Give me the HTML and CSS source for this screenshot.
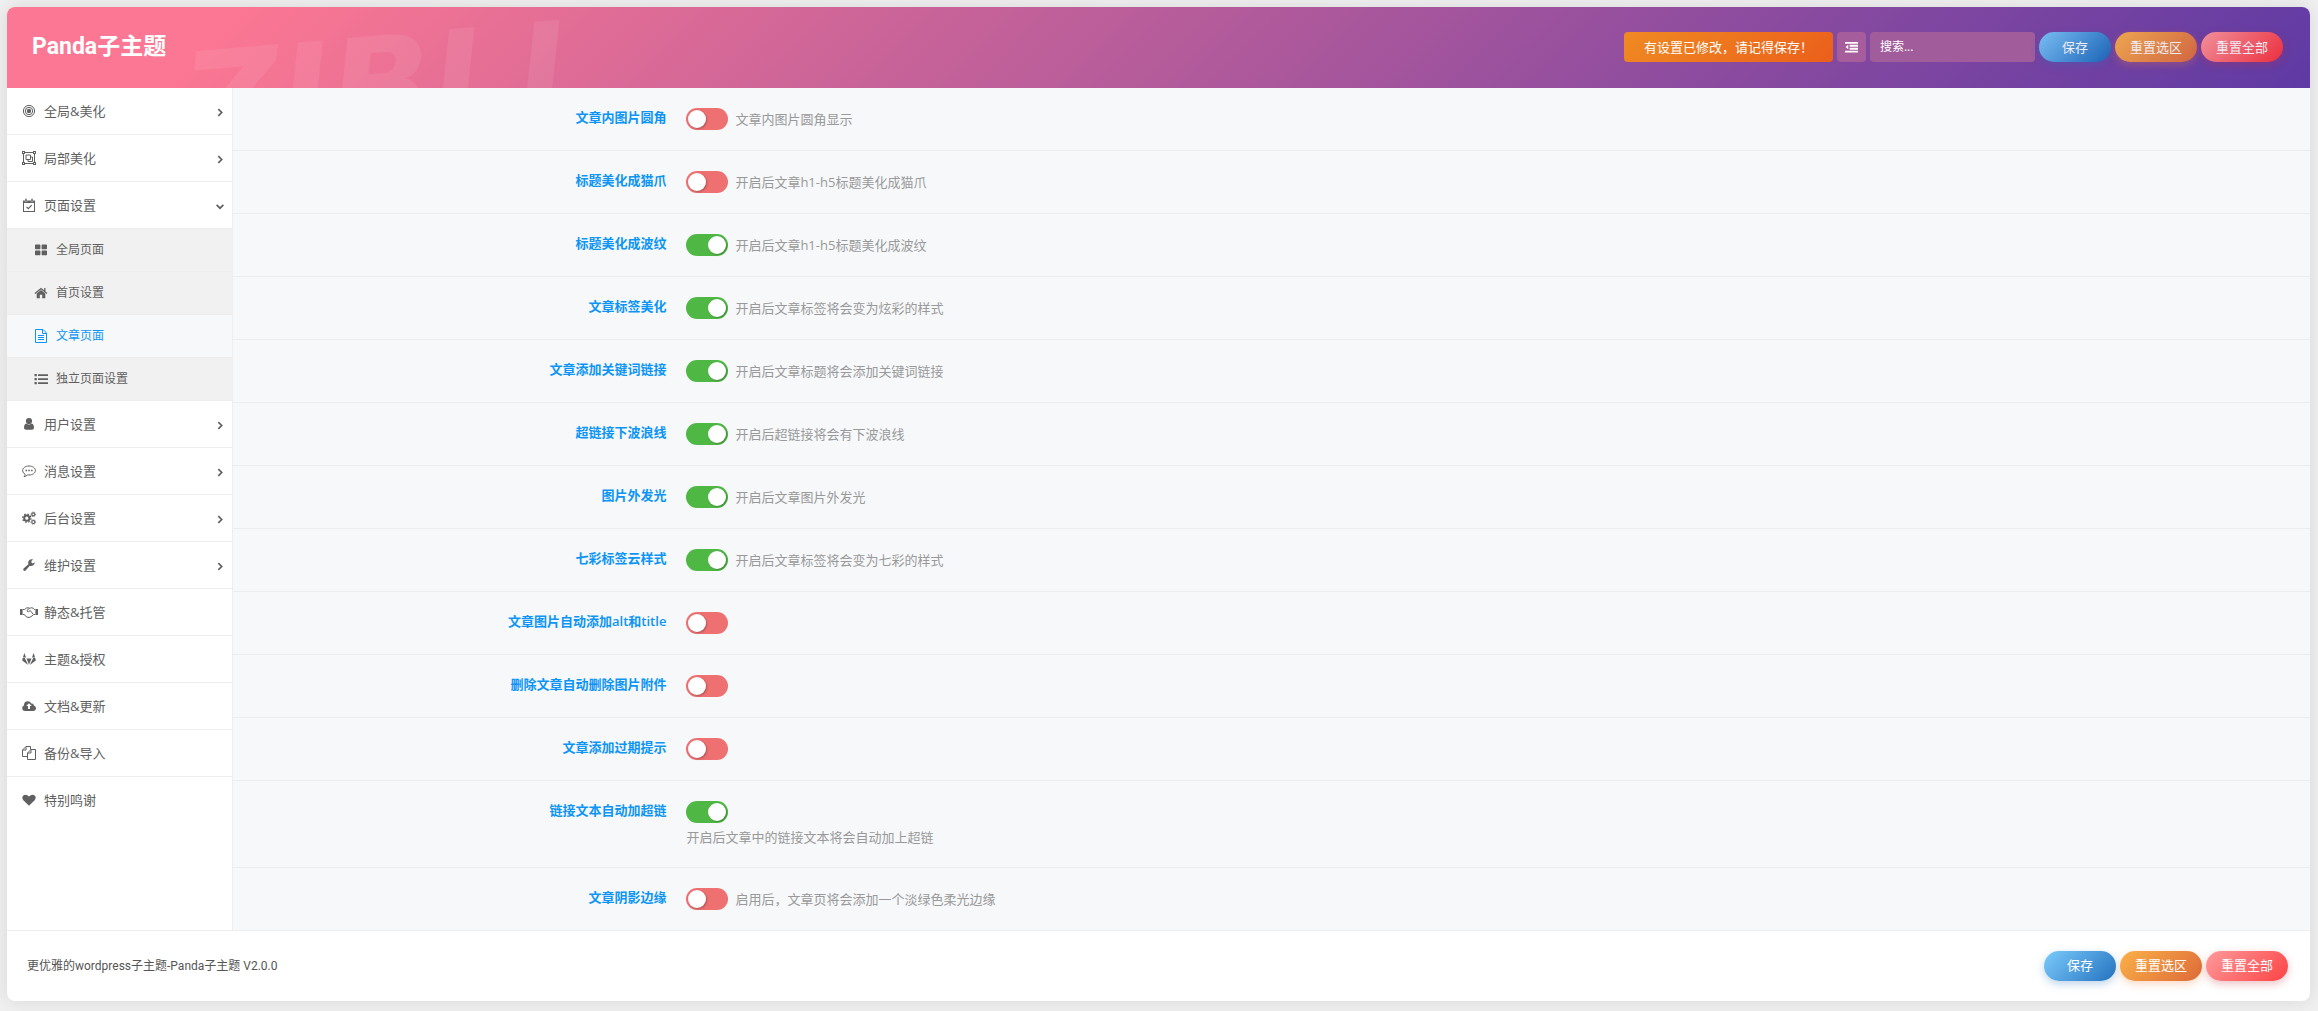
FILE: index.html
```html
<!DOCTYPE html>
<html lang="zh-CN">
<head>
<meta charset="utf-8">
<title>Panda子主题</title>
<link rel="stylesheet" href="styles.css">
</head>
<body>
<svg class="sprite" aria-hidden="true">
  <symbol id="i-target" viewBox="0 0 14 14"><g fill="none" stroke="currentColor" stroke-width="1"><circle cx="7" cy="7" r="5.600"/><circle cx="7" cy="7" r="3.700"/></g><circle cx="7" cy="7" r="2.200" fill="currentColor"/></symbol>
  <symbol id="i-group" viewBox="0 0 16 14"><g fill="none" stroke="currentColor"><path d="M2.500 1.500h11v11h-11z"/><path d="M5 4h4.500v4.500H5z"/><path d="M9.500 6H11.500v4.500H7V8.500"/></g><path d="M1 0h3v3H1zM12 0h3v3h-3zM1 11h3v3H1zM12 11h3v3h-3z" fill="currentColor"/><path d="M2 1h1v1H2zM13 1h1v1h-1zM2 12h1v1H2zM13 12h1v1h-1z" fill="#fff"/></symbol>
  <symbol id="i-calendar" viewBox="0 0 14 14"><path d="M1 2.500h12V14H1zM2 5v8h10V5z" fill="currentColor" fill-rule="evenodd"/><rect x="3" y=".5" width="2" height="3.500" rx="1" fill="currentColor" stroke="#fff" stroke-width=".4"/><rect x="9" y=".5" width="2" height="3.500" rx="1" fill="currentColor" stroke="#fff" stroke-width=".4"/><path d="M4.500 8.800l1.800 1.800 3.400-3.500" fill="none" stroke="currentColor" stroke-width="1.200"/></symbol>
  <symbol id="i-grid" viewBox="0 0 14 14"><path d="M1.700 1.500h4q.7 0 .7.700v3.400q0 .7-.7.700h-4q-.7 0-.7-.7V2.200q0-.7.7-.7zM8.300 1.500h4q.7 0 .7.700v3.400q0 .7-.7.700h-4q-.7 0-.7-.7V2.200q0-.7.7-.7zM1.700 7.500h4q.7 0 .7.700v3.400q0 .7-.7.700h-4q-.7 0-.7-.7V8.200q0-.7.7-.7zM8.300 7.500h4q.7 0 .7.700v3.400q0 .7-.7.700h-4q-.7 0-.7-.7V8.200q0-.7.7-.7z" fill="currentColor"/></symbol>
  <symbol id="i-home" viewBox="0 0 14 14"><path d="M7 4l4.300 3.600v4.200q0 .5-.5.500H8.200V8.800H5.800v3.500H3.200q-.5 0-.5-.5V7.600z" fill="currentColor"/><path d="M1 7.500L7 2.500l6 5M10.800 2v3.500" fill="none" stroke="currentColor" stroke-width="1.300"/></symbol>
  <symbol id="i-file" viewBox="0 0 14 14"><path d="M1.500.5h7.500l3.500 3.500v9.500h-11zM8.500.5v4h4M4 6.500h6M4 8.500h6M4 10.500h6" fill="none" stroke="currentColor"/></symbol>
  <symbol id="i-list" viewBox="0 0 14 14"><path d="M.5 2h2.300v2.200H.5zM.5 6h2.300v2.200H.5zM.5 10h2.300v2.200H.5zM4 2.200h10v1.800H4zM4 6.200h10v1.800H4zM4 10.200h10v1.800H4z" fill="currentColor"/></symbol>
  <symbol id="i-user" viewBox="0 0 14 14"><circle cx="7" cy="4" r="3.100" fill="currentColor"/><path d="M4.200 6.500q2.800 2.200 5.600 0Q12 7.200 12 10.800q0 2-2 2H4q-2 0-2-2 0-3.600 2.200-4.300z" fill="currentColor"/></symbol>
  <symbol id="i-comment" viewBox="0 0 14 14"><path d="M7 2c3.600 0 6.400 2 6.400 4.500S10.600 11 7 11q-.8 0-1.500-.1Q3.800 12.600 2 12.700q1-1 1.200-2.400Q.6 9 .6 6.500C.6 4 3.400 2 7 2z" fill="none" stroke="currentColor"/><path d="M3.500 5.800H5v1.500H3.500zM6.300 5.800h1.500v1.500H6.300zM9.100 5.800h1.500v1.500H9.100z" fill="currentColor"/></symbol>
  <symbol id="i-cogs" viewBox="0 0 14 14"><g fill="none" stroke="currentColor"><circle cx="4.800" cy="7.200" r="2.600" stroke-width="2"/><circle cx="4.800" cy="7.200" r="4.100" stroke-width="1.400" stroke-dasharray="1.600 1.620"/><circle cx="11.300" cy="3.300" r="1.500" stroke-width="1.200"/><circle cx="11.300" cy="3.300" r="2.300" stroke-width=".8" stroke-dasharray="1 .8"/><circle cx="11.300" cy="11" r="1.500" stroke-width="1.200"/><circle cx="11.300" cy="11" r="2.300" stroke-width=".8" stroke-dasharray="1 .8"/></g></symbol>
  <symbol id="i-wrench" viewBox="0 0 14 14"><path d="M12.800 4.200a3.600 3.600 0 0 1-5 3.500L3.600 12.500q-1 .9-2 0-.9-1 0-2l4.800-4.200a3.600 3.600 0 0 1 4.800-4.700L9.400 3v1.600l1.400.8z" fill="currentColor"/></symbol>
  <symbol id="i-shake" viewBox="0 0 18 14"><path d="M0 4h2.600v6H0zM15.400 4H18v6h-2.600z" fill="currentColor"/><path d="M3 4.500h1.500L6.500 3q2-.6 3 .3 2-1 3.500-.2l1.200 1.400H15M3 9.500h1l3 2.700q2 .8 4-.5l2.600-2.200H15M9.500 3.300L7 5.400q0 1.500 1.500 1.300L10.300 5.500 13 9" fill="none" stroke="currentColor"/></symbol>
  <symbol id="i-gitlab" viewBox="0 0 14 14"><path d="M2.400 1L4 5.600H.9zM11.600 1l1.500 4.600H10zM4.500 6.500h5L7 12.500zM.7 6L2.800 6 6.200 13 .2 8.400zM13.300 6l-2.100 0L7.800 13l6-4.600z" fill="currentColor"/></symbol>
  <symbol id="i-cloud" viewBox="0 0 14 14"><path d="M3.200 12Q.2 11.800.2 9q0-1.800 1.700-2.600Q2 2.300 5.800 2.200q2.600 0 3.500 2.400 2.300-.5 2.600 2Q14 7.200 14 9.300 13.900 12 11 12zM6 7v3h2V7h1.800L7 4.200 4.200 7z" fill="currentColor" fill-rule="evenodd"/></symbol>
  <symbol id="i-copy" viewBox="0 0 14 14"><path d="M5.500 10.500h-5V4L4 .5h4.500v3M4 .5V4H.5M5.500 7L9 3.500h4.500v10h-8zM9 3.500V7H5.500" fill="none" stroke="currentColor"/></symbol>
  <symbol id="i-heart" viewBox="0 0 14 14"><path d="M7 12.800L1.300 7.300Q-.6 5 .8 3 3.800.4 7 3.500q3.200-3.100 6.200-.5 1.400 2-.5 4.300z" fill="currentColor"/></symbol>
  <symbol id="i-outdent" viewBox="0 0 14 14"><path d="M0 1.500h14v2H0zM5 4.700h9v2H5zM5 7.900h9v2H5zM0 11h14v2H0zM3.500 4.500v5L.6 7z" fill="currentColor"/></symbol>
  <symbol id="i-chevron" viewBox="0 0 8 8"><path d="M2.500 1L5.500 4 2.500 7" fill="none" stroke="currentColor" stroke-width="1.500"/></symbol>
</svg>

<form class="panel">
  <header class="header">
    <span class="watermark" aria-hidden="true">ZIBLL</span>
    <h1 class="title">Panda子主题</h1>
    <div class="tools">
      <span class="notice">有设置已修改，请记得保存！</span>
      <button type="button" class="expand" aria-label="展开"><svg class="expand-icon"><use href="#i-outdent"/></svg></button>
      <input class="search" type="text" placeholder="搜索..." aria-label="搜索">
      <button type="button" class="btn btn-save">保存</button>
      <button type="button" class="btn btn-section">重置选区</button>
      <button type="button" class="btn btn-all">重置全部</button>
    </div>
  </header>

  <div class="body">
    <nav class="nav">
      <ul class="menu">
        <li><a class="item" href="#"><svg class="icon"><use href="#i-target"/></svg>全局&amp;美化<svg class="arrow"><use href="#i-chevron"/></svg></a></li>
        <li><a class="item" href="#"><svg class="icon"><use href="#i-group"/></svg>局部美化<svg class="arrow"><use href="#i-chevron"/></svg></a></li>
        <li><a class="item" href="#"><svg class="icon"><use href="#i-calendar"/></svg>页面设置<svg class="arrow arrow-open"><use href="#i-chevron"/></svg></a>
          <ul class="submenu">
            <li><a class="subitem" href="#"><svg class="icon icon-sub"><use href="#i-grid"/></svg>全局页面</a></li>
            <li><a class="subitem" href="#"><svg class="icon icon-sub"><use href="#i-home"/></svg>首页设置</a></li>
            <li><a class="subitem active" href="#"><svg class="icon icon-sub"><use href="#i-file"/></svg>文章页面</a></li>
            <li><a class="subitem" href="#"><svg class="icon icon-sub"><use href="#i-list"/></svg>独立页面设置</a></li>
          </ul>
        </li>
        <li><a class="item" href="#"><svg class="icon"><use href="#i-user"/></svg>用户设置<svg class="arrow"><use href="#i-chevron"/></svg></a></li>
        <li><a class="item" href="#"><svg class="icon"><use href="#i-comment"/></svg>消息设置<svg class="arrow"><use href="#i-chevron"/></svg></a></li>
        <li><a class="item" href="#"><svg class="icon"><use href="#i-cogs"/></svg>后台设置<svg class="arrow"><use href="#i-chevron"/></svg></a></li>
        <li><a class="item" href="#"><svg class="icon"><use href="#i-wrench"/></svg>维护设置<svg class="arrow"><use href="#i-chevron"/></svg></a></li>
        <li><a class="item" href="#"><svg class="icon"><use href="#i-shake"/></svg>静态&amp;托管</a></li>
        <li><a class="item" href="#"><svg class="icon"><use href="#i-gitlab"/></svg>主题&amp;授权</a></li>
        <li><a class="item" href="#"><svg class="icon"><use href="#i-cloud"/></svg>文档&amp;更新</a></li>
        <li><a class="item" href="#"><svg class="icon"><use href="#i-copy"/></svg>备份&amp;导入</a></li>
        <li><a class="item" href="#"><svg class="icon"><use href="#i-heart"/></svg>特别鸣谢</a></li>
      </ul>
    </nav>

    <main class="content">
      <div class="row"><label class="label" for="f1">文章内图片圆角</label><div class="field"><input class="switch" type="checkbox" id="f1"><span class="desc">文章内图片圆角显示</span></div></div>
      <div class="row"><label class="label" for="f2">标题美化成猫爪</label><div class="field"><input class="switch" type="checkbox" id="f2"><span class="desc">开启后文章h1-h5标题美化成猫爪</span></div></div>
      <div class="row"><label class="label" for="f3">标题美化成波纹</label><div class="field"><input class="switch" type="checkbox" id="f3" checked><span class="desc">开启后文章h1-h5标题美化成波纹</span></div></div>
      <div class="row"><label class="label" for="f4">文章标签美化</label><div class="field"><input class="switch" type="checkbox" id="f4" checked><span class="desc">开启后文章标签将会变为炫彩的样式</span></div></div>
      <div class="row"><label class="label" for="f5">文章添加关键词链接</label><div class="field"><input class="switch" type="checkbox" id="f5" checked><span class="desc">开启后文章标题将会添加关键词链接</span></div></div>
      <div class="row"><label class="label" for="f6">超链接下波浪线</label><div class="field"><input class="switch" type="checkbox" id="f6" checked><span class="desc">开启后超链接将会有下波浪线</span></div></div>
      <div class="row"><label class="label" for="f7">图片外发光</label><div class="field"><input class="switch" type="checkbox" id="f7" checked><span class="desc">开启后文章图片外发光</span></div></div>
      <div class="row"><label class="label" for="f8">七彩标签云样式</label><div class="field"><input class="switch" type="checkbox" id="f8" checked><span class="desc">开启后文章标签将会变为七彩的样式</span></div></div>
      <div class="row"><label class="label" for="f9">文章图片自动添加alt和title</label><div class="field"><input class="switch" type="checkbox" id="f9"></div></div>
      <div class="row"><label class="label" for="f10">删除文章自动删除图片附件</label><div class="field"><input class="switch" type="checkbox" id="f10"></div></div>
      <div class="row"><label class="label" for="f11">文章添加过期提示</label><div class="field"><input class="switch" type="checkbox" id="f11"></div></div>
      <div class="row"><label class="label" for="f12">链接文本自动加超链</label><div class="field field-stacked"><input class="switch" type="checkbox" id="f12" checked><span class="desc">开启后文章中的链接文本将会自动加上超链</span></div></div>
      <div class="row"><label class="label" for="f13">文章阴影边缘</label><div class="field"><input class="switch" type="checkbox" id="f13"><span class="desc">启用后，文章页将会添加一个淡绿色柔光边缘</span></div></div>
    </main>
  </div>

  <footer class="footer">
    <span>更优雅的wordpress子主题-Panda子主题 V2.0.0</span>
    <div class="actions">
      <button type="button" class="btn btn-save">保存</button>
      <button type="button" class="btn btn-section">重置选区</button>
      <button type="button" class="btn btn-all">重置全部</button>
    </div>
  </footer>
</form>
</body>
</html>
```
FILE: styles.css
```css
* { box-sizing: border-box; }

body {
  margin: 0;
  padding: 7px 8px 10px 7px;
  background: #f0f0f1;
  color: #555;
  font: 13px/20px "Open Sans", "Noto Sans CJK SC", sans-serif;
}

ul { list-style: none; margin: 0; padding: 0; }
a { color: inherit; text-decoration: none; }
button, input { font: inherit; margin: 0; border: 0; }
.sprite { display: none; }

.panel {
  background: #fff;
  border-radius: 8px;
  box-shadow: 0 0 20px rgba(0, 0, 0, 0.1);
}

/* Header */
.header {
  position: relative;
  display: flex;
  align-items: center;
  justify-content: space-between;
  height: 81px;
  padding: 0 27px 2px 25px;
  overflow: hidden;
  border-radius: 8px 8px 0 0;
  background: linear-gradient(135deg, #fb7793 10%, #5f3aa4 100%);
}

.watermark {
  position: absolute;
  left: 176px;
  top: 12px;
  color: rgba(255, 255, 255, 0.08);
  font: italic 700 134px/134px "DejaVu Sans", sans-serif;
  transform: rotate(-5deg);
}

.title {
  margin: 0;
  color: #fff;
  font: 700 23px/30px Roboto, "Noto Sans CJK SC", sans-serif;
}

.tools, .actions { display: flex; align-items: center; gap: 4px; }

.notice {
  padding: 5px 20px;
  border-radius: 4px;
  color: #fff;
  background: linear-gradient(135deg, #ef8a22, #eb5f1b);
}

.expand {
  display: flex;
  padding: 8px;
  border-radius: 4px;
  color: #fff;
  background: #a65d9b;
}
.expand-icon { width: 13px; height: 14px; }

.search {
  width: 165px;
  height: 30px;
  padding: 0 10px;
  border-radius: 4px;
  color: #fff;
  background: #a05c9b;
  font-size: 12px;
}
.search::placeholder { color: #fff; opacity: 1; }

.btn {
  height: 30px;
  padding: 0 15px;
  border-radius: 15px;
  color: #fff;
}
.btn-save {
  padding: 0 23px;
  background: linear-gradient(135deg, #7bcbfc, #2472bf);
  box-shadow: 0 3px 8px rgba(36, 114, 191, 0.3);
}
.btn-section {
  background: linear-gradient(135deg, #fab148, #dd6a38);
  box-shadow: 0 3px 8px rgba(250, 130, 60, 0.3);
}
.btn-all {
  background: linear-gradient(135deg, #ff9a9b, #fc4344);
  box-shadow: 0 3px 8px rgba(200, 50, 60, 0.3);
}
.tools .btn { opacity: 0.9; }
.tools .btn-save { background: linear-gradient(135deg, #7bcbfc, #1267b9); }
.tools .btn-all { background: linear-gradient(135deg, #ff9a9b, #fb2d33); }

/* Sidebar */
.body { display: flex; }

.nav {
  flex: 0 0 226px;
  border-right: 1px solid #eee;
  color: #606060;
}

.item, .subitem { display: flex; align-items: center; }
.item {
  height: 47px;
  padding: 0 7px 0 12px;
  border-bottom: 1px solid #eee;
}
.menu > li:last-child .item { border-bottom-color: transparent; }

.subitem {
  height: 43px;
  padding-left: 26px;
  border-bottom: 1px solid #eee;
  background: #f1f1f1;
  font-size: 12px;
}
.active { color: #0d95f5; background: #f6f8fa; }

.icon {
  flex: none;
  width: 20px;
  height: 14px;
  margin-right: 5px;
}
.icon-sub { width: 16px; margin-right: 7px; }

.arrow {
  width: 10px;
  height: 9px;
  margin: 2px 0 0 auto;
}
.arrow-open { transform: rotate(90deg); }

/* Settings */
.content {
  flex: 1;
  background: #f6f8fa;
}

.row {
  display: flex;
  gap: 20px;
  padding: 20px 30px;
  border-bottom: 1px solid #ecedef;
}
.row:last-child { border-bottom: 0; }

.label {
  flex: 0 0 20%;
  color: #0d95f5;
  font-weight: 600;
  line-height: 18px;
  text-align: right;
}

.field {
  display: flex;
  align-items: center;
  gap: 7px;
}
.field-stacked {
  flex-direction: column;
  align-items: flex-start;
  gap: 4px;
}

.switch {
  flex: none;
  appearance: none;
  width: 42px;
  height: 22px;
  padding: 2px;
  border-radius: 11px;
  background: #ee7071;
}
.switch::before {
  content: "";
  display: block;
  width: 18px;
  height: 18px;
  border-radius: 9px;
  background: #fff;
  box-shadow: 1px 1px 2px rgba(0, 0, 0, 0.25);
}
.switch:checked { background: #4fb845; }
.switch:checked::before { margin-left: auto; }

.desc { color: #999; }

/* Footer */
.footer {
  display: flex;
  align-items: center;
  justify-content: space-between;
  height: 71px;
  padding: 0 22px 0 20px;
  border-top: 1px solid #eee;
  font: 12px/20px Roboto, "Noto Sans CJK SC", sans-serif;
}
.footer .btn { font-size: 13px; }
```
